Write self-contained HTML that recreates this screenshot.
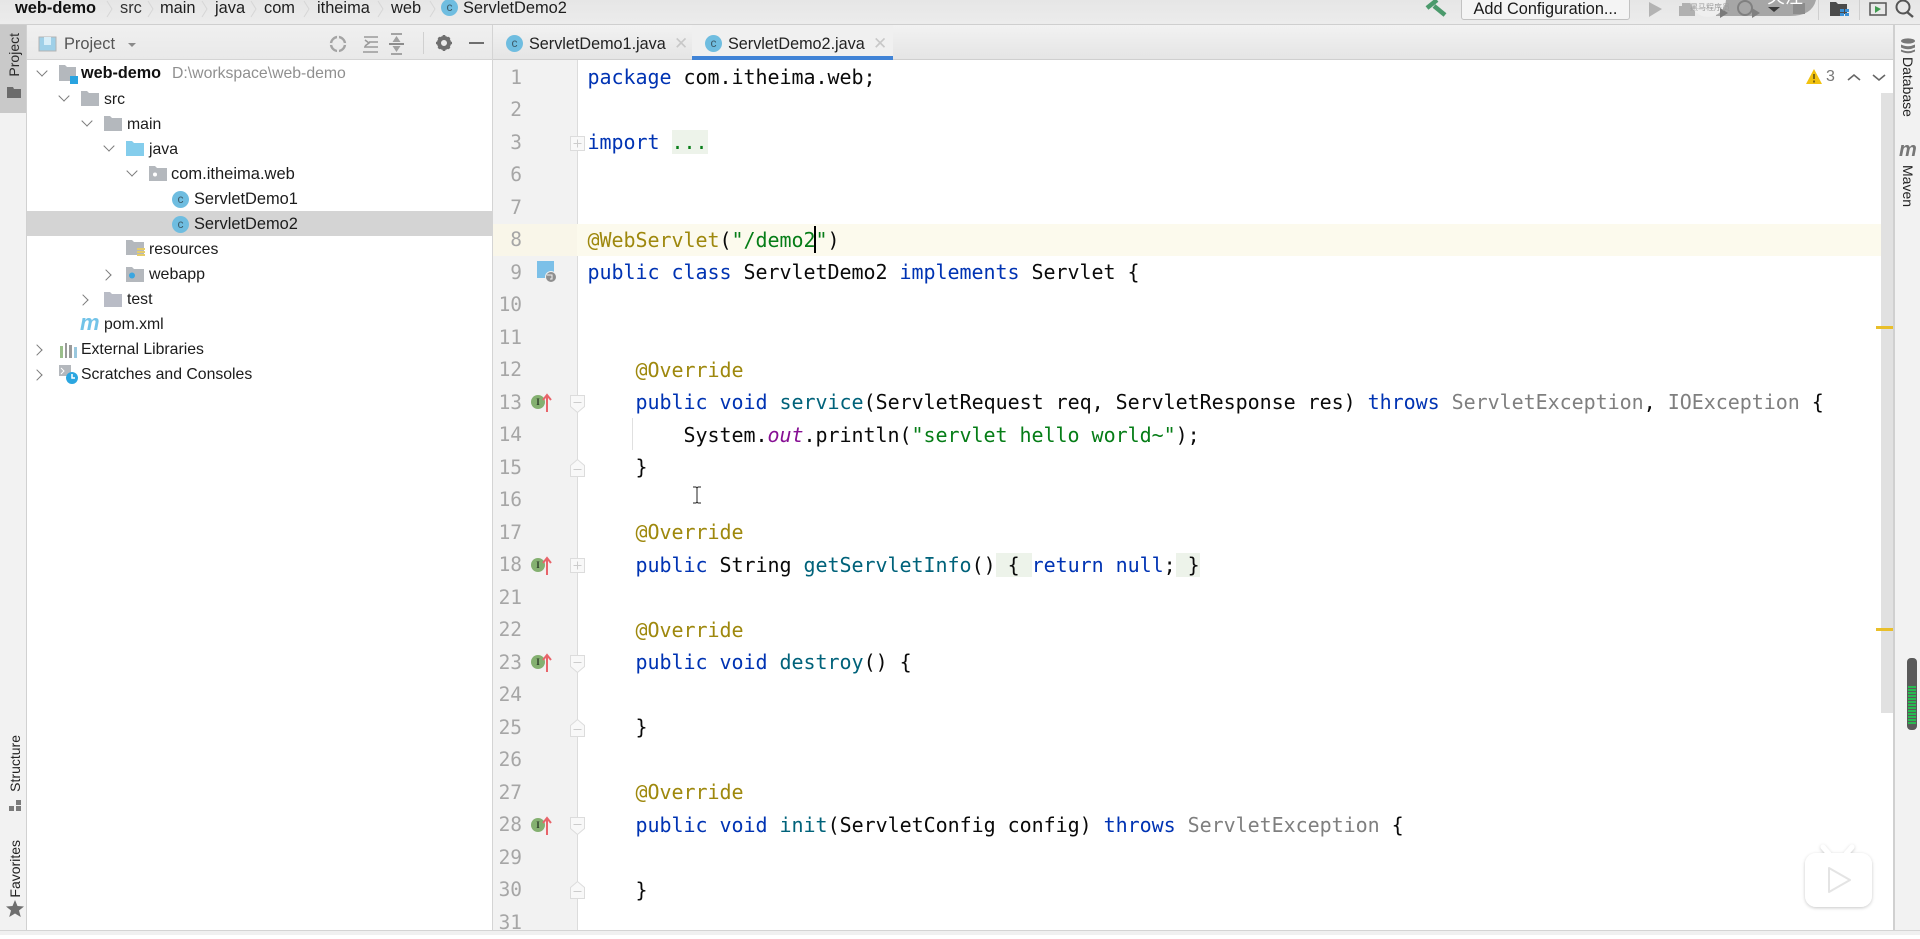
<!DOCTYPE html>
<html><head><meta charset="utf-8"><title>ServletDemo2</title>
<style>
html,body{margin:0;padding:0;width:1920px;height:935px;overflow:hidden;background:#fff;font-family:"Liberation Sans","Noto Sans CJK SC",sans-serif;color:#1a1a1a}
.a{position:absolute}
#top{left:0;top:0;width:1920px;height:25px;background:linear-gradient(#e6e6e6,#ececec);border-bottom:1px solid #cfcfcf;box-sizing:border-box}
.bc{position:absolute;top:-1px;font-size:16.4px;line-height:19px;color:#1e1e1e;white-space:nowrap}
.sep{position:absolute;top:0;width:8px;height:18px}
#left{left:0;top:25px;width:26px;height:905px;background:#f2f2f2;border-right:1px solid #d1d1d1}
#lbtn{left:0;top:25px;width:26px;height:88px;background:#c9c9c9}
.vt{position:absolute;writing-mode:vertical-rl;transform:rotate(180deg);font-size:14px;line-height:16px;color:#222;white-space:nowrap}
#phead{left:27px;top:25px;width:465px;height:34px;background:linear-gradient(#f0f0f0,#e9e9e9);border-bottom:1px solid #d4d4d4}
#tree{left:27px;top:60px;width:465px;height:870px;background:#fff}
.row{position:absolute;left:0;width:465px;height:25px;line-height:25px;font-size:15.8px;color:#1c1c1c;white-space:nowrap}
.row span.t{position:absolute;top:0}
.arr{position:absolute;top:8px;width:7px;height:7px;border-right:1.5px solid #7b7b7b;border-bottom:1.5px solid #7b7b7b;transform:rotate(45deg)}
.arr.r{transform:rotate(-45deg);top:9px}
.ci{position:absolute;width:17px;height:17px;border-radius:50%;background:#6fbde0;color:#3c5a68;font-size:12px;line-height:17px;text-align:center;font-weight:normal}
#tabs{left:493px;top:25px;width:1400px;height:34px;background:linear-gradient(#f2f2f2,#e5e5e5);border-bottom:1px solid #cfcfcf}
.tab{position:absolute;top:0;font-size:16.2px;line-height:35px;color:#222;white-space:nowrap}
#gut{left:493px;top:60px;width:84px;height:870px;background:#f2f2f2;border-right:1px solid #dcdcdc}
#hl{left:493px;top:224px;width:1400px;height:32px;background:#fcfaed}
#hlg{left:493px;top:224px;width:84px;height:32px;background:#f9f6e9}
.code,.nums{font-family:"DejaVu Sans Mono","Liberation Mono",monospace;font-size:20px;letter-spacing:-.04px;line-height:32.5px}
.code{left:587.5px;top:61.25px;color:#0a0a0a}
.code div,.nums div{height:32.5px;white-space:pre}
.nums{left:493px;top:61.75px;width:29px;text-align:right;color:#a6a6a6;font-size:19.5px}
.k{color:#0033b3}.s{color:#067d17}.n{color:#9e880d}.m{color:#00627a}.g{color:#7f7f7f}.p{color:#871094;font-style:italic}.f{background:#edf3ea}
.fold{position:absolute;left:569px}
#sb{left:1881px;top:93px;width:12px;height:620px;background:#e1e1e1}
#right{left:1893px;top:25px;width:27px;height:905px;background:#f2f2f2;border-left:2px solid #d0d0d0;box-sizing:border-box}
#bot{left:0;top:930px;width:1920px;height:5px;background:#f0f0f0;border-top:1px solid #d4d4d4;box-sizing:border-box}
.ov{position:absolute;width:14px;height:14px;border-radius:50%;background:#84b070;color:#2c3c28;font:bold 9px/14px "Liberation Serif";text-align:center}
</style></head><body>

<div class="a" id="top"></div>
<div class="bc" style="left:15px;font-weight:bold;color:#111;font-size:16.4px">web-demo</div>
<svg class="sep" style="left:106px"><path d="M1 1L6 9L1 17" stroke="#d6d6d6" fill="none"/></svg><div class="bc" style="left:120px;color:#333">src</div>
<svg class="sep" style="left:147px"><path d="M1 1L6 9L1 17" stroke="#d6d6d6" fill="none"/></svg><div class="bc" style="left:160px">main</div>
<svg class="sep" style="left:201px"><path d="M1 1L6 9L1 17" stroke="#d6d6d6" fill="none"/></svg><div class="bc" style="left:215px">java</div>
<svg class="sep" style="left:250px"><path d="M1 1L6 9L1 17" stroke="#d6d6d6" fill="none"/></svg><div class="bc" style="left:264px">com</div>
<svg class="sep" style="left:303px"><path d="M1 1L6 9L1 17" stroke="#d6d6d6" fill="none"/></svg><div class="bc" style="left:317px">itheima</div>
<svg class="sep" style="left:377px"><path d="M1 1L6 9L1 17" stroke="#d6d6d6" fill="none"/></svg><div class="bc" style="left:391px">web</div>
<svg class="sep" style="left:429px"><path d="M1 1L6 9L1 17" stroke="#d6d6d6" fill="none"/></svg>
<div class="ci" style="left:441px;top:-1px">c</div>
<div class="bc" style="left:463px">ServletDemo2</div>

<svg class="a" style="left:1420px;top:0" width="32" height="20" viewBox="0 0 32 20"><path d="M7 8 L17 0 M14 6 L25 15" stroke="#4b9a6c" stroke-width="4.5" fill="none"/></svg>
<div class="a" style="left:1461px;top:-3px;width:169px;height:23px;background:#f4f4f4;border:1px solid #c2c2c2;border-radius:3px;box-sizing:border-box;font-size:16.3px;line-height:22px;text-align:center;color:#1a1a1a">Add Configuration...</div>
<svg class="a" style="left:1640px;top:0" width="280" height="22" viewBox="0 0 280 22">
<path d="M9 2 L22 9 L9 17Z" fill="#b3b3b3"/>
<path d="M42 3h10v3h3v10h-16v-10h3z" fill="#b0b0b0"/>
<path d="M76 0H176Q172 16 150 16H76Z" fill="#a6a6a6"/>
<circle cx="68" cy="-1" r="18" fill="#efefef"/>
<path d="M80 8 L88 13 L80 18Z" fill="#7a7a7a"/><circle cx="105" cy="8" r="7" fill="none" stroke="#808080" stroke-width="2"/><path d="M112 8 L120 13 L112 18Z" fill="#808080"/>
<path d="M128 7 H140 L134 12Z" fill="#3a3a3a"/><rect x="153" y="3" width="12" height="11" fill="#8c8c8c"/>
<text x="127" y="3" font-size="18" fill="#fff" font-family="Noto Sans CJK SC">关注</text>
<text x="50" y="10" font-size="8" fill="#999" font-family="Noto Sans CJK SC">黑马程序员</text>
<rect x="178" y="0" width="1" height="20" fill="#cfcfcf"/><rect x="219" y="0" width="1" height="20" fill="#cfcfcf"/>
<path d="M190 2 h6 l2 2 h9 v10 h-6 v2 h-11z" fill="#4b4b4b"/><path d="M200 9h4v3h-4zM205 9h4v3h-4zM200 13h4v3h-4zM205 13h4v3h-4z" fill="#3b8fd4"/>
<rect x="230" y="3" width="16" height="12" fill="none" stroke="#555" stroke-width="1.5"/><path d="M235 6 L241 9 L235 13Z" fill="#3f9b4f"/>
<circle cx="263" cy="7" r="6.5" fill="none" stroke="#555" stroke-width="2"/><path d="M267 12 L273 17" stroke="#555" stroke-width="2.4"/>
</svg>

<div class="a" id="left"></div>
<div class="a" id="lbtn"></div>
<div class="vt" style="left:6px;top:33px;color:#2a2a2a">Project</div>
<svg class="a" style="left:7px;top:86px" width="15" height="13"><path d="M0 1h6l1 2h7v9H0z" fill="#6b6b6b"/></svg>
<div class="vt" style="left:7px;top:735px">Structure</div>
<svg class="a" style="left:8px;top:799px" width="14" height="13"><path d="M8 1h5v5H8zM1 7h5v5H1zM8 7h5v5H8z" fill="#7a7a7a"/></svg>
<div class="vt" style="left:7px;top:840px">Favorites</div>
<svg class="a" style="left:6px;top:900px" width="18" height="17"><path d="M9 0 L11.5 6 L18 6.5 L13 10.5 L14.8 17 L9 13.5 L3.2 17 L5 10.5 L0 6.5 L6.5 6Z" fill="#6f6f6f"/></svg>

<div class="a" id="phead"></div>
<svg class="a" style="left:38px;top:35px" width="20" height="17"><rect x="1" y="2" width="17" height="14" fill="#9fd0e8" stroke="#b3b3b3"/><rect x="6" y="2" width="7" height="8" fill="#d8eef8"/></svg>
<div class="a" style="left:64px;top:35px;font-size:16.4px;line-height:18px;color:#555">Project</div>
<div class="a" style="left:128px;top:43px;width:0;height:0;border:4px solid transparent;border-top:4px solid #8a8a8a"></div>
<svg class="a" style="left:325px;top:30px" width="165" height="26" viewBox="0 0 165 26">
<circle cx="13" cy="14" r="7" fill="none" stroke="#a4a4a4" stroke-width="2.4"/><path d="M13 5v5M13 18v5M4 14h5M17 14h5" stroke="#e9e9e9" stroke-width="2"/>
<path d="M39 7h14M44 12h9M39 17h14M38 22h15M40 10l4 3-4 3" stroke="#9a9a9a" stroke-width="1.6" fill="none"/>
<path d="M64 14h15" stroke="#8c8c8c" stroke-width="2"/><path d="M71.500 6l4 6h-8zM71.500 22l4-6h-8z" fill="#a0a0a0"/><path d="M66 4h11M66 24h11" stroke="#8c8c8c" stroke-width="1.500"/>
<rect x="98" y="2" width="1" height="22" fill="#d0d0d0"/>
<circle cx="119" cy="13" r="5" fill="none" stroke="#6f6f6f" stroke-width="4"/><path d="M119 5v3M119 18v3M111 13h3M124 13h3M113.500 7.500l2 2M122.500 16.500l2 2M124.500 7.500l-2 2M115.500 16.500l-2 2" stroke="#6f6f6f" stroke-width="2.600"/>
<path d="M144 13h15" stroke="#6e6e6e" stroke-width="2"/>
</svg>

<div class="a" id="tree"></div>
<div class="a" style="left:27px;top:211px;width:465px;height:25px;background:#d4d4d4"></div>

<div class="a" style="left:27px;top:61px;width:465px;height:340px">
<div class="row" style="top:0"><i class="arr" style="left:11px;top:6px"></i>
<svg class="a" style="left:32px;top:4px" width="20" height="19"><path d="M0 0h6l2 2h9v14H0z" fill="#b4b8bd"/><rect x="11" y="11" width="8" height="8" fill="#29a3e0"/></svg>
<span class="t" style="left:54px;font-weight:bold;color:#111;font-size:16.2px">web-demo</span><span class="t" style="left:145px;color:#8f8f8f">D:\workspace\web-demo</span></div>
<div class="row" style="top:26px"><i class="arr" style="left:33px;top:5px"></i>
<svg class="a" style="left:54px;top:4px" width="18" height="15"><path d="M0 0h6l2 2h10v13H0z" fill="#b4b8bd"/></svg><span class="t" style="left:77px">src</span></div>
<div class="row" style="top:51px"><i class="arr" style="left:56px;top:5px"></i>
<svg class="a" style="left:77px;top:4px" width="18" height="15"><path d="M0 0h6l2 2h10v13H0z" fill="#b4b8bd"/></svg><span class="t" style="left:100px">main</span></div>
<div class="row" style="top:76px"><i class="arr" style="left:78px;top:5px"></i>
<svg class="a" style="left:99px;top:4px" width="18" height="15"><path d="M0 0h6l2 2h10v13H0z" fill="#84cdec"/></svg><span class="t" style="left:122px">java</span></div>
<div class="row" style="top:101px"><i class="arr" style="left:101px;top:5px"></i>
<svg class="a" style="left:122px;top:4px" width="18" height="15"><path d="M0 0h6l2 2h10v13H0z" fill="#b4b8bd"/><circle cx="6" cy="8.500" r="2" fill="#fff"/></svg><span class="t" style="left:144px;font-size:16.5px">com.itheima.web</span></div>
<div class="row" style="top:126px"><i class="ci" style="left:145px;top:4px;font-style:normal">c</i><span class="t" style="left:167px;font-size:16.4px">ServletDemo1</span></div>
<div class="row" style="top:151px"><i class="ci" style="left:145px;top:4px;font-style:normal">c</i><span class="t" style="left:167px;font-size:16.4px">ServletDemo2</span></div>
<div class="row" style="top:176px"><svg class="a" style="left:99px;top:3px" width="20" height="19"><path d="M0 0h6l2 2h10v13H0z" fill="#b4b8bd"/><path d="M11 8h8v2h-8zM11 11h8v2h-8zM11 14h8v2h-8z" fill="#e5cc6b"/></svg><span class="t" style="left:122px">resources</span></div>
<div class="row" style="top:201px"><i class="arr r" style="left:75px"></i>
<svg class="a" style="left:99px;top:5px" width="18" height="15"><path d="M0 0h6l2 2h10v13H0z" fill="#b4b8bd"/><circle cx="6" cy="8.500" r="3" fill="#3aa6e0"/></svg><span class="t" style="left:122px;font-size:16px">webapp</span></div>
<div class="row" style="top:226px"><i class="arr r" style="left:52px"></i>
<svg class="a" style="left:77px;top:5px" width="18" height="15"><path d="M0 0h6l2 2h10v13H0z" fill="#b9bcc6"/></svg><span class="t" style="left:100px">test</span></div>
<div class="row" style="top:251px"><span class="a" style="left:53px;top:0;font:italic bold 22px/22px 'Liberation Sans';color:#72c3e8">m</span><span class="t" style="left:77px">pom.xml</span></div>
<div class="row" style="top:276px"><i class="arr r" style="left:6px"></i>
<svg class="a" style="left:32px;top:4px" width="18" height="17"><path d="M1 5h3v12H1z" fill="#9bbf8b"/><path d="M6 2h2v15H6zM10 4h3v13h-3z" fill="#9a9a9a"/><path d="M15 6h3v11h-3z" fill="#9ac8de"/></svg><span class="t" style="left:54px">External Libraries</span></div>
<div class="row" style="top:301px"><i class="arr r" style="left:6px"></i>
<svg class="a" style="left:32px;top:3px" width="20" height="20"><path d="M0 0h12v11H0z" fill="#b4b8bd"/><path d="M2 3l3 3-3 3" stroke="#fff" fill="none"/><circle cx="13" cy="13" r="6" fill="#2ba6e0"/><path d="M13 9v4h3" stroke="#fff" stroke-width="1.500" fill="none"/></svg><span class="t" style="left:54px">Scratches and Consoles</span></div>
</div>

<div class="a" style="left:492px;top:25px;width:1px;height:905px;background:#d4d4d4"></div>
<div class="a" id="tabs"></div>
<div class="a" style="left:692px;top:25px;width:201px;height:35px;background:#f0f0f0"></div>
<div class="a" style="left:692px;top:56px;width:201px;height:4px;background:#4083d6"></div>
<div class="ci a" style="left:506px;top:35px">c</div><div class="tab" style="left:529px;top:27px">ServletDemo1.java</div>
<div class="a" style="left:674px;top:33px;color:#c8c8c8;font-size:17px;line-height:22px">✕</div>
<div class="ci a" style="left:705px;top:35px">c</div><div class="tab" style="left:728px;top:27px">ServletDemo2.java</div>
<div class="a" style="left:873px;top:33px;color:#c8c8c8;font-size:17px;line-height:22px">✕</div>

<div class="a" id="gut"></div>
<div class="a" id="hl"></div>
<div class="a" id="hlg"></div>

<div class="a nums"><div>1</div><div>2</div><div>3</div><div>6</div><div>7</div><div>8</div><div>9</div><div>10</div><div>11</div><div>12</div><div>13</div><div>14</div><div>15</div><div>16</div><div>17</div><div>18</div><div>21</div><div>22</div><div>23</div><div>24</div><div>25</div><div>26</div><div>27</div><div>28</div><div>29</div><div>30</div><div>31</div></div>

<div class="a code"><div><span class="k">package</span> com.itheima.web;</div><div></div><div><span class="k">import</span> <span class="f s">...</span></div><div></div><div></div><div><span class="n">@WebServlet</span>(<span class="s">"/demo2"</span>)</div><div><span class="k">public class</span> ServletDemo2 <span class="k">implements</span> Servlet {</div><div></div><div></div><div>    <span class="n">@Override</span></div><div>    <span class="k">public void</span> <span class="m">service</span>(ServletRequest req, ServletResponse res) <span class="k">throws</span> <span class="g">ServletException</span>, <span class="g">IOException</span> {</div><div>        System.<span class="p">out</span>.println(<span class="s">"servlet hello world~"</span>);</div><div>    }</div><div></div><div>    <span class="n">@Override</span></div><div>    <span class="k">public</span> String <span class="m">getServletInfo</span>()<span class="f"> { </span><span class="k">return null</span>;<span class="f"> }</span></div><div></div><div>    <span class="n">@Override</span></div><div>    <span class="k">public void</span> <span class="m">destroy</span>() {</div><div></div><div>    }</div><div></div><div>    <span class="n">@Override</span></div><div>    <span class="k">public void</span> <span class="m">init</span>(ServletConfig config) <span class="k">throws</span> <span class="g">ServletException</span> {</div><div></div><div>    }</div><div></div></div>

<div class="a" style="left:814px;top:226px;width:2px;height:27px;background:#000"></div>
<div class="a" style="left:632px;top:418px;width:1px;height:32px;background:#e0e0e0"></div>

<svg class="fold" style="top:135px" width="17" height="16"><path d="M1.500 1.500h14v14h-14z" fill="#f8f8f8" stroke="#dcdcdc"/><path d="M4.500 8.500h8M8.500 4.500v8" stroke="#ccc"/></svg>
<svg class="fold" style="top:395px" width="17" height="19"><path d="M1.500 .5h14v11l-7 6-7-6z" fill="#f8f8f8" stroke="#dcdcdc"/><path d="M4.500 7.500h8" stroke="#ccc"/></svg>
<svg class="fold" style="top:458px" width="17" height="19"><path d="M1.500 18.500h14v-11l-7-6-7 6z" fill="#f8f8f8" stroke="#dcdcdc"/><path d="M4.500 11.500h8" stroke="#ccc"/></svg>
<svg class="fold" style="top:557px" width="17" height="16"><path d="M1.500 1.500h14v14h-14z" fill="#f8f8f8" stroke="#dcdcdc"/><path d="M4.500 8.500h8M8.500 4.500v8" stroke="#ccc"/></svg>
<svg class="fold" style="top:655px" width="17" height="19"><path d="M1.500 .5h14v11l-7 6-7-6z" fill="#f8f8f8" stroke="#dcdcdc"/><path d="M4.500 7.500h8" stroke="#ccc"/></svg>
<svg class="fold" style="top:718px" width="17" height="19"><path d="M1.500 18.500h14v-11l-7-6-7 6z" fill="#f8f8f8" stroke="#dcdcdc"/><path d="M4.500 11.500h8" stroke="#ccc"/></svg>
<svg class="fold" style="top:817px" width="17" height="19"><path d="M1.500 .5h14v11l-7 6-7-6z" fill="#f8f8f8" stroke="#dcdcdc"/><path d="M4.500 7.500h8" stroke="#ccc"/></svg>
<svg class="fold" style="top:880px" width="17" height="19"><path d="M1.500 18.500h14v-11l-7-6-7 6z" fill="#f8f8f8" stroke="#dcdcdc"/><path d="M4.500 11.500h8" stroke="#ccc"/></svg>

<svg class="a" style="left:537px;top:261px" width="22" height="23"><path d="M0 0h17v17H0z" fill="#7cc0e8"/><circle cx="14" cy="16" r="6" fill="#f2f2f2"/><circle cx="14" cy="16" r="5" fill="#8f8f8f"/><path d="M10 14h5v4h-2" stroke="#f2f2f2" fill="none"/></svg>

<div class="ov" style="left:531px;top:395px">I</div>
<div class="ov" style="left:531px;top:558px">I</div>
<div class="ov" style="left:531px;top:655px">I</div>
<div class="ov" style="left:531px;top:818px">I</div>
<svg class="a" style="left:542px;top:393px" width="10" height="20"><path d="M5 19V3M1 7l4-5 4 5" stroke="#e8646a" stroke-width="2" fill="none"/></svg>
<svg class="a" style="left:542px;top:556px" width="10" height="20"><path d="M5 19V3M1 7l4-5 4 5" stroke="#e8646a" stroke-width="2" fill="none"/></svg>
<svg class="a" style="left:542px;top:653px" width="10" height="20"><path d="M5 19V3M1 7l4-5 4 5" stroke="#e8646a" stroke-width="2" fill="none"/></svg>
<svg class="a" style="left:542px;top:816px" width="10" height="20"><path d="M5 19V3M1 7l4-5 4 5" stroke="#e8646a" stroke-width="2" fill="none"/></svg>

<svg class="a" style="left:691px;top:486px" width="12" height="18"><path d="M2 1h3l1 1 1-1h3M6 2v14M2 17h3l1-1 1 1h3" stroke="#222" fill="none"/></svg>

<svg class="a" style="left:1806px;top:69px" width="16" height="15"><path d="M8 0L16 15H0Z" fill="#f2c20f"/><path d="M8 5v5M8 11.500v2" stroke="#5a4a10" stroke-width="1.500"/></svg>
<div class="a" style="left:1826px;top:68px;font-size:16px;line-height:18px;color:#777">3</div>
<svg class="a" style="left:1846px;top:70px" width="70" height="14"><path d="M2 10l6-5 6 5" stroke="#666" stroke-width="1.600" fill="none"/><path d="M27 5l6 5 6-5" stroke="#666" stroke-width="1.600" fill="none"/></svg>

<div class="a" id="sb"></div>
<div class="a" style="left:1876px;top:326px;width:17px;height:3px;background:#e9bf2a"></div>
<div class="a" style="left:1876px;top:628px;width:17px;height:3px;background:#e9bf2a"></div>

<div class="a" id="right"></div>
<svg class="a" style="left:1900px;top:38px" width="16" height="17"><ellipse cx="8" cy="3" rx="7" ry="2.600" fill="#777"/><path d="M1 6.500q7 3.500 14 0v3q-7 3.500-14 0zM1 11.500q7 3.500 14 0v2q-7 3.500-14 0z" fill="#777"/></svg>
<div class="vt" style="left:1900px;top:57px;transform:none;font-size:14px;color:#222">Database</div>
<div class="a" style="left:1899px;top:140px;font:italic bold 20px/20px 'Liberation Sans';color:#777">m</div>
<div class="vt" style="left:1900px;top:165px;transform:none;font-size:14px;color:#222">Maven</div>

<svg class="a" style="left:1906px;top:657px" width="12" height="74"><rect x="1" y="1" width="10" height="72" rx="4" fill="#5a5a5a"/><path d="M2 30h8M2 33h8M2 36h8M2 39h8M2 42h8M2 45h8M2 48h8M2 51h8M2 54h8M2 57h8M2 60h8M2 63h8M2 66h8" stroke="#22c74f" stroke-width="1.800"/></svg>

<svg class="a" style="left:1800px;top:840px" width="96" height="76" viewBox="0 0 96 76">
<defs><filter id="sh" x="-20%" y="-20%" width="140%" height="140%"><feDropShadow dx="0" dy="1" stdDeviation="1.500" flood-color="#000" flood-opacity=".22"/></filter></defs>
<g filter="url(#sh)" fill="#fff"><path d="M23 7 L29 14 M52 7 L46 14" stroke="#fff" stroke-width="5" stroke-linecap="round"/><rect x="5" y="13" width="67" height="54" rx="11"/></g>
<path d="M29 28 L50 40 L29 52Z" fill="#fff" stroke="#e4e4e4" stroke-width="2" stroke-linejoin="round"/></svg>

<div class="a" id="bot"></div>
</body></html>
